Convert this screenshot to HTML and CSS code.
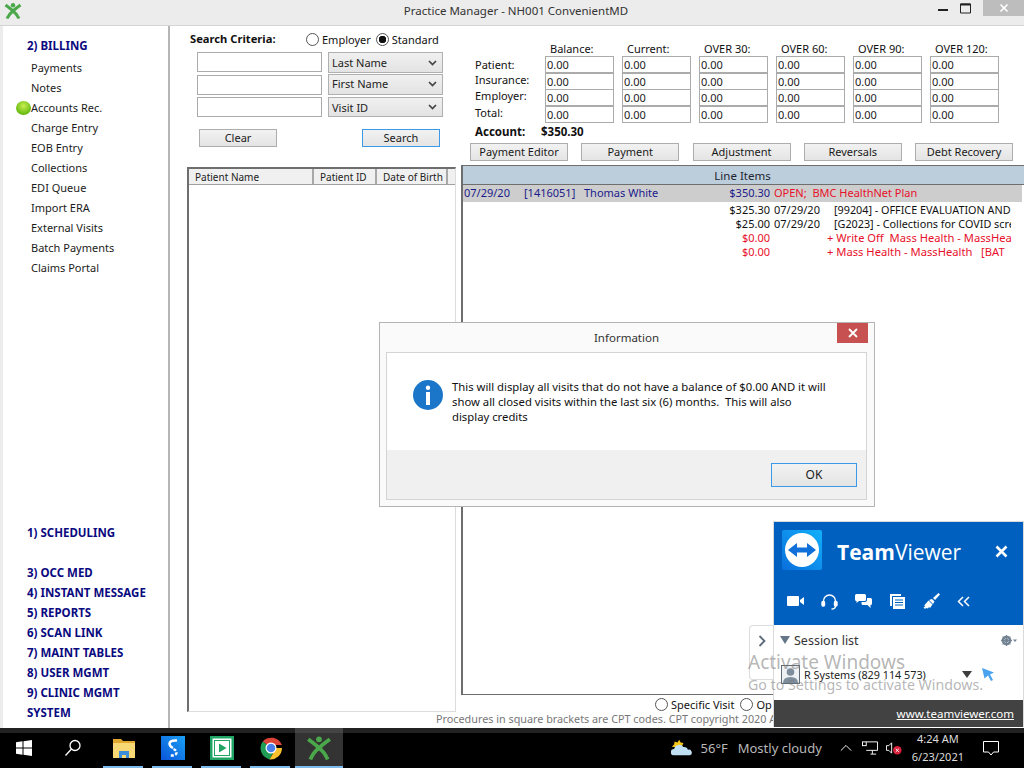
FILE: index.html
```html
<!DOCTYPE html>
<html lang="en">
<head>
<meta charset="utf-8">
<title>Practice Manager</title>
<link rel="stylesheet" href="styles.css">
</head>
<body>
<div class="screen">
  <div class="window">
    <header class="titlebar">
      <svg class="app-logo" viewBox="0 0 18 18"><circle cx="9" cy="3.2" r="2.2" fill="#4aa84a"/><path d="M1.5 3 Q7 7 9 9 Q11 7 16.5 3 M3 16.5 Q5 12 9 9 Q13 12 15 16.5" fill="none" stroke="#4aa84a" stroke-width="3"/></svg>
      <div class="title">Practice Manager - NH001 ConvenientMD</div>
      <div class="winctl">
        <span class="ctl"><svg width="10" height="10" viewBox="0 0 10 10"><path d="M0 7h10" stroke="#222" stroke-width="2"/></svg></span>
        <span class="ctl"><svg width="11" height="11" viewBox="0 0 11 11"><path d="M.5 2v8h10V1H.5z" fill="none" stroke="#222"/><path d="M.5 1.500h10" stroke="#222" stroke-width="2"/></svg></span>
        <span class="ctl ctl-close"><svg width="10" height="10" viewBox="0 0 10 10"><path d="M1.5 1.5l7 7M8.5 1.5l-7 7" stroke="#fff" stroke-width="1.6"/></svg></span>
      </div>
    </header>
    <div class="workspace">
      <nav class="sidebar">
        <div class="nav-top">
          <div class="nav-head nav-first">2) BILLING</div>
          <a class="nav-item">Payments</a>
          <a class="nav-item">Notes</a>
          <a class="nav-item nav-current"><span class="led"></span>Accounts Rec.</a>
          <a class="nav-item">Charge Entry</a>
          <a class="nav-item">EOB Entry</a>
          <a class="nav-item">Collections</a>
          <a class="nav-item">EDI Queue</a>
          <a class="nav-item">Import ERA</a>
          <a class="nav-item">External Visits</a>
          <a class="nav-item">Batch Payments</a>
          <a class="nav-item">Claims Portal</a>
        </div>
        <div class="nav-bottom">
          <div class="nav-head nav-gap">1) SCHEDULING</div>
          <div class="nav-head">3) OCC MED</div>
          <div class="nav-head">4) INSTANT MESSAGE</div>
          <div class="nav-head">5) REPORTS</div>
          <div class="nav-head">6) SCAN LINK</div>
          <div class="nav-head">7) MAINT TABLES</div>
          <div class="nav-head">8) USER MGMT</div>
          <div class="nav-head">9) CLINIC MGMT</div>
          <div class="nav-head">SYSTEM</div>
        </div>
      </nav>
      <section class="search">
        <div class="crit">
          <span class="crit-label">Search Criteria:</span>
          <label class="radio-label"><span class="radio"></span>Employer</label>
          <label class="radio-label"><span class="radio radio-on"></span>Standard</label>
        </div>
        <div class="fields">
          <div class="field"></div><div class="select select-tall">Last Name<svg class="chev" viewBox="0 0 9 6"><path d="M1 1l3.500 3.500L8 1" fill="none" stroke="#444" stroke-width="1.700"/></svg></div>
          <div class="field"></div><div class="select select-up">First Name<svg class="chev" viewBox="0 0 9 6"><path d="M1 1l3.500 3.500L8 1" fill="none" stroke="#444" stroke-width="1.700"/></svg></div>
          <div class="field"></div><div class="select">Visit ID<svg class="chev" viewBox="0 0 9 6"><path d="M1 1l3.500 3.500L8 1" fill="none" stroke="#444" stroke-width="1.700"/></svg></div>
        </div>
        <div class="search-btns">
          <div class="btn btn-search">Clear</div>
          <div class="btn btn-search btn-focus">Search</div>
        </div>
        <div class="results">
          <div class="results-head">
            <span class="col col-name">Patient Name</span>
            <span class="col col-id">Patient ID</span>
            <span class="col col-dob">Date of Birth</span>
          </div>
        </div>
      </section>
      <section class="account">
        <div class="aging">
          <span></span><span class="ah">Balance:</span><span class="ah">Current:</span><span class="ah">OVER 30:</span><span class="ah">OVER 60:</span><span class="ah">OVER 90:</span><span class="ah">OVER 120:</span>
          <span class="rl rl-first">Patient:</span><span class="cell">0.00</span><span class="cell">0.00</span><span class="cell">0.00</span><span class="cell">0.00</span><span class="cell">0.00</span><span class="cell">0.00</span>
          <span class="rl">Insurance:</span><span class="cell">0.00</span><span class="cell">0.00</span><span class="cell">0.00</span><span class="cell">0.00</span><span class="cell">0.00</span><span class="cell">0.00</span>
          <span class="rl">Employer:</span><span class="cell">0.00</span><span class="cell">0.00</span><span class="cell">0.00</span><span class="cell">0.00</span><span class="cell">0.00</span><span class="cell">0.00</span>
          <span class="rl">Total:</span><span class="cell">0.00</span><span class="cell">0.00</span><span class="cell">0.00</span><span class="cell">0.00</span><span class="cell">0.00</span><span class="cell">0.00</span>
        </div>
        <div class="acct-total"><b class="acct-label">Account:</b><b>$350.30</b></div>
        <div class="actions">
          <div class="btn btn-act">Payment Editor</div>
          <div class="btn btn-act">Payment</div>
          <div class="btn btn-act">Adjustment</div>
          <div class="btn btn-act">Reversals</div>
          <div class="btn btn-act">Debt Recovery</div>
        </div>
        <div class="items">
          <div class="items-head">Line Items</div>
          <div class="li li-main">
            <span>07/29/20</span><span>[1416051]</span><span>Thomas White</span><span class="amt">$350.30</span>
            <span class="li-open">OPEN;&nbsp; BMC HealthNet Plan</span>
          </div>
          <div class="li li-sub"><span class="amt">$325.30</span><span class="d">07/29/20</span><span class="desc">[99204] - OFFICE EVALUATION AND</span></div>
          <div class="li li-sub"><span class="amt">$25.00</span><span class="d">07/29/20</span><span class="desc">[G2023] - Collections for COVID scre</span></div>
          <div class="li li-sub li-red"><span class="amt">$0.00</span><span class="d"></span><span class="desc-red">+ Write Off&nbsp; Mass Health - MassHea</span></div>
          <div class="li li-sub li-red"><span class="amt">$0.00</span><span class="d"></span><span class="desc-red">+ Mass Health - MassHealth&nbsp;&nbsp; [BAT</span></div>
        </div>
        <div class="visit-opts">
          <label class="radio-label"><span class="radio"></span>Specific Visit</label>
          <label class="radio-label"><span class="radio"></span>Op</label>
        </div>
        <div class="cpt">Procedures in square brackets are CPT codes. CPT copyright 2020 A</div>
      </section>
    </div>
  </div>
  <footer class="taskbar">
    <div class="tb-left">
      <span class="tb-start"><svg width="16" height="16" viewBox="0 0 16 16" fill="#fff"><path d="M0 2.300L6.500 1.300V7.500H0zM7.500 1.200L16 0V7.500H7.500zM0 8.500H6.500V14.700L0 13.700zM7.500 8.500H16V16L7.500 14.800z"/></svg></span>
      <span class="tb-search"><svg width="18" height="18" viewBox="0 0 18 18" fill="none" stroke="#fff" stroke-width="1.300"><circle cx="11" cy="6.500" r="5"/><path d="M7.500 10L1.500 16.500"/></svg></span>
      <span class="tb-app tb-run"><svg width="22" height="20" viewBox="0 0 22 20"><path d="M0 1h8l2 2h12v4H0z" fill="#e0a92e"/><path d="M0 5h22v15H0z" fill="#f8d775"/><path d="M6 20v-7h10v7h-3v-3H9v3z" fill="#3b8fd8"/></svg></span>
      <span class="tb-app tb-run"><svg width="24" height="24" viewBox="0 0 24 24"><defs><linearGradient id="stile" x1="0" y1="1" x2="1" y2="0"><stop offset="0" stop-color="#0a55d8"/><stop offset="1" stop-color="#1aa0f5"/></linearGradient></defs><rect width="24" height="24" fill="url(#stile)"/><path d="M16 4.500Q9 4 8.500 7.500Q8.300 10 12 12" fill="none" stroke="#fff" stroke-width="2.400"/><path d="M12.500 13Q16 14.500 15.500 17Q15 20 9 19.500" fill="none" stroke="#fff" stroke-width="2.400" stroke-dasharray="3 1.600"/></svg></span>
      <span class="tb-app tb-run"><svg width="24" height="24" viewBox="0 0 24 24"><rect width="24" height="24" fill="#1fa463"/><rect x="2.500" y="2.500" width="19" height="19" fill="#fff"/><rect x="4" y="4" width="16" height="16" fill="#1fa463"/><rect x="5" y="5" width="14" height="14" fill="#fff"/><path d="M9 7.500l7.500 4.500L9 16.500z" fill="#1fa463"/></svg></span>
      <span class="tb-app tb-run"><svg width="24" height="24" viewBox="0 0 24 24"><path d="M12 12L3.700 5.500A11.500 11.500 0 0 1 23 9H12z" fill="#db4437"/><path d="M12 12L3.700 5.500A11.500 11.500 0 0 0 10.500 23.400L16 13z" fill="#1f9d55"/><path d="M12 12h11A11.500 11.500 0 0 1 10.500 23.400L16 14z" fill="#fbc02d"/><circle cx="12" cy="12" r="5.500" fill="#fff"/><circle cx="12" cy="12" r="4.300" fill="#4a80ec"/></svg></span>
      <span class="tb-app tb-active"><svg width="26" height="26" viewBox="0 0 18 18"><circle cx="9" cy="3" r="2" fill="#4aa84a"/><path d="M1.500 3 Q7 7 9 9 Q11 7 16.500 3 M3 17 Q5 12 9 9 Q13 12 15 17" fill="none" stroke="#4aa84a" stroke-width="2.600"/></svg></span>
    </div>
    <div class="tb-right">
      <svg class="tb-weather" width="22" height="20" viewBox="0 0 24 20"><path d="M9 1l1.500 3 3 .500-2 5-6 1.500-1.500-2-3-.500 2.500-2.500.500-3 3 1z" fill="#f5c518"/><path d="M3 18a3.500 3.500 0 0 1 .500-7 5.500 5.500 0 0 1 10-2 4 4 0 0 1 5 3 3 3 0 0 1 2 6z" fill="#bfe0f5"/></svg>
      <span class="tb-temp">56°F</span>
      <span class="tb-cond">Mostly cloudy</span>
      <svg class="tb-chevron" width="12" height="8" viewBox="0 0 14 8"><path d="M1 7l6-6 6 6" fill="none" stroke="#fff" stroke-width="1.100"/></svg>
      <svg class="tb-net" width="16" height="14" viewBox="0 0 17 14" fill="none" stroke="#fff"><path d="M4.500 .500h12v9h-12M9 13.500h6M11 9.500v4"/><rect x=".5" y=".5" width="4" height="4"/></svg>
      <span class="tb-vol"><svg width="16" height="14" viewBox="0 0 17 14"><path d="M.5 4.500h2.500l3-3v11l-3-3H.5z" fill="none" stroke="#fff"/><circle cx="12" cy="9.500" r="4.500" fill="#d8203a"/><path d="M10.300 7.800l3.400 3.400M13.700 7.800l-3.400 3.400" stroke="#fff"/></svg></span>
      <div class="tb-clock"><span>4:24 AM</span><span>6/23/2021</span></div>
      <svg class="tb-notify" width="16" height="15" viewBox="0 0 16 15"><path d="M.5 .5h15v10.500h-5l-2.500 3-2.500-3h-5z" fill="none" stroke="#fff"/></svg>
    </div>
  </footer>

  <div class="dialog">
    <div class="dlg-title">Information
      <span class="dlg-close"><svg width="10" height="10" viewBox="0 0 10 10"><path d="M1 1l8 8M9 1l-8 8" stroke="#fff" stroke-width="1.800"/></svg></span>
    </div>
    <div class="dlg-panel">
      <div class="dlg-body">
        <svg class="dlg-icon" width="30" height="30" viewBox="0 0 30 30"><circle cx="15" cy="15" r="15" fill="#1b76c9"/><rect x="12.800" y="5.500" width="4.400" height="4.400" rx="2.200" fill="#fff"/><rect x="13" y="12" width="4" height="13" fill="#fff"/></svg>
        <p class="dlg-text">This will display all visits that do not have a balance of $0.00 AND it will<br>show all closed visits within the last six (6) months.&nbsp; This will also<br>display credits</p>
      </div>
      <div class="dlg-foot"><div class="btn btn-ok">OK</div></div>
    </div>
  </div>

  <div class="tv-tab"><svg width="8" height="12" viewBox="0 0 8 12"><path d="M1.500 1l5 5-5 5" fill="none" stroke="#5a6a7a" stroke-width="1.800"/></svg></div>
  <aside class="tv">
    <div class="tv-blue">
      <div class="tv-head">
        <svg class="tv-logo" width="40" height="40" viewBox="0 0 40 40"><defs><linearGradient id="tvg" x1="0" y1="1" x2="1" y2="0"><stop offset="0" stop-color="#0a6fdc"/><stop offset="1" stop-color="#12b0fb"/></linearGradient></defs><rect width="40" height="40" rx="2" fill="url(#tvg)"/><circle cx="20" cy="20" r="17" fill="#fff"/><path d="M6 20l9-7v4.500h10V13l9 7-9 7v-4.500H15V27z" fill="#0e70d8"/></svg>
        <div class="tv-name"><b>Team</b>Viewer</div>
        <svg class="tv-x" width="13" height="13" viewBox="0 0 13 13"><path d="M1.500 1.500l10 10M11.500 1.500l-10 10" stroke="#fff" stroke-width="2.600"/></svg>
      </div>
      <div class="tv-tools">
        <svg width="17" height="12" viewBox="0 0 17 12" fill="#fff"><rect y="1" width="12" height="10" rx="1"/><path d="M13 5l4-3v8l-4-3z"/></svg>
        <svg width="17" height="17" viewBox="0 0 17 17" fill="none" stroke="#fff" stroke-width="1.400"><path d="M2.500 10V8a6 6 0 0 1 12 0v2"/><rect x="1" y="8.500" width="2.500" height="4.500" rx="1" fill="#fff"/><rect x="13.500" y="8.500" width="2.500" height="4.500" rx="1" fill="#fff"/><path d="M14.500 13q0 3-4 3"/></svg>
        <svg width="17" height="15" viewBox="0 0 17 15" fill="#fff"><path d="M0 1.500Q0 0 1.500 0h8Q11 0 11 1.500v4Q11 7 9.500 7H4L1.500 9V7Q0 7 0 5.500z"/><path d="M12 4h3.500Q17 4 17 5.500v4Q17 11 15.500 11v3l-3-3H8Q6.500 11 6.500 9.500V8H10Q12 8 12 6z"/></svg>
        <svg width="17" height="15" viewBox="-1 0 17 15" fill="#fff"><path d="M0 0h11v2H2v10H0z"/><path d="M3 3h12v12H3z"/><path d="M5 6h8M5 8.500h8M5 11h8" stroke="#0060c0"/></svg>
        <svg width="17" height="17" viewBox="0 0 17 17" fill="#fff"><path d="M10 5l2 2 5-5.500L15.500 0z"/><path d="M9 6l2.500 2.500L10 11 6 7z"/><path d="M5.500 7.500l4 4L7 15l-1-1-1 1.500L3 15l-1 1-1.500-1.500 2-1.500-1.500-.500L2 11.500z"/></svg>
        <svg width="13" height="11" viewBox="0 0 13 11" fill="none" stroke="#fff" stroke-width="1.500"><path d="M6 1L1.500 5.500 6 10M12 1L7.500 5.500 12 10"/></svg>
      </div>
    </div>
    <div class="tv-white">
      <div class="tv-sess">
        <svg width="10" height="8" viewBox="0 0 10 8"><path d="M0 0h10L5 8z" fill="#647687"/></svg>
        <span class="tv-sess-label">Session list</span>
        <svg class="tv-gear" width="16" height="11" viewBox="0 0 16 11"><circle cx="5.500" cy="5.500" r="3.700" fill="none" stroke="#738393" stroke-width="2.200"/><path d="M5.500 0v11M0 5.500h11M1.600 1.600l7.800 7.800M9.400 1.600l-7.800 7.800" stroke="#738393" stroke-width="1.300"/><path d="M12 4.500h4L14 7z" fill="#738393"/></svg>
      </div>
      <div class="tv-row">
        <svg class="tv-avatar" width="19" height="19" viewBox="0 0 19 19"><rect x=".5" y=".5" width="18" height="18" fill="#eef1f4" stroke="#5f6b76"/><circle cx="9.500" cy="7" r="3.800" fill="#7d8d9c"/><path d="M2 18q0-6 7.500-6t7.500 6z" fill="#7d8d9c"/></svg>
        <span class="tv-peer">R Systems (829 114 573)</span>
        <svg class="tv-drop" width="10" height="7" viewBox="0 0 10 7"><path d="M0 0h10L5 7z" fill="#3d3d3d"/></svg>
        <svg class="tv-cursor" width="13" height="13" viewBox="0 0 13 13"><path d="M0 0l12 4.500-4 2L11 12l-2 1-3-5.500-3.500 3z" fill="#4aa3ee"/></svg>
      </div>
    </div>
    <div class="tv-foot"><a class="tv-link">www.teamviewer.com</a></div>
  </aside>

  <div class="watermark">
    <div class="wm-1">Activate Windows</div>
    <div class="wm-2">Go to Settings to activate Windows.</div>
  </div>
</div>
</body>
</html>
```
FILE: styles.css
```css
* { box-sizing: border-box; }
html, body { margin: 0; padding: 0; }
body { font-family: "Noto Sans", "Liberation Sans", sans-serif; font-size: 11px; color: #111; background: #fff; }
.screen { position: relative; width: 1024px; height: 768px; overflow: hidden; display: flex; flex-direction: column; }

/* main window */
.window { height: 728px; flex: none; display: flex; flex-direction: column; background: #fff; }
.titlebar { height: 26px; flex: none; background: #ececec; border-bottom: 1px solid #d4d4d4; display: flex; align-items: flex-start; position: relative; }
.app-logo { width: 18px; height: 18px; margin: 2px 0 0 4px; }
.title { position: absolute; left: 8px; right: 0; top: 3px; text-align: center; font-size: 11.500px; line-height: 16px; color: #333; }
.winctl { margin-left: auto; display: flex; position: relative; }
.ctl { width: 23px; height: 16px; display: flex; align-items: center; justify-content: center; }
.ctl-close { width: 41px; background: #bdbdbd; margin-left: 6px; }

.workspace { flex: 1; min-height: 0; display: flex; border-left: 3px solid #ececec; }
.sidebar { width: 167px; flex: none; border-right: 2px solid #b5b5b5; display: flex; flex-direction: column; justify-content: space-between; padding: 10px 0 5px; }
.nav-head { padding-left: 24px; font-weight: 700; font-size: 11.500px; line-height: 20px; color: #0a0a80; white-space: nowrap; }
.nav-first { margin-bottom: 2px; }
.nav-gap { margin-bottom: 20px; }
.nav-item { display: block; padding-left: 28px; line-height: 20px; color: #1c1c1c; position: relative; }
.led { position: absolute; left: 13px; top: 3px; width: 15px; height: 14px; border-radius: 50%; background: radial-gradient(circle at 50% 35%, #c8ee50, #62b80f 75%); }

/* search column */
.search { width: 291px; flex: none; display: flex; flex-direction: column; padding: 5px 0 16px 18px; position: relative; }
.crit { display: flex; align-items: center; height: 16px; }
.crit-label { font-weight: 700; width: 118px; padding: 0 0 2px 2px; white-space: nowrap; font-size: 11.200px; }
.radio-label { display: inline-flex; align-items: center; gap: 3px; margin-right: 5px; white-space: nowrap; }
.radio { width: 13px; height: 13px; border: 1px solid #555; border-radius: 50%; background: #fff; display: inline-block; flex: none; }
.radio-on { background: radial-gradient(circle, #111 0 3.500px, #fff 4px); }
.fields { display: grid; grid-template-columns: 125px 115px; column-gap: 6px; row-gap: 2px; margin: 5px 0 0 9px; width: 246px; }
.field { height: 20px; border: 1px solid #ababab; background: #fff; }
.select { height: 20px; border: 1px solid #b0b0b0; background: linear-gradient(#f0f0f0, #e3e3e3); display: flex; align-items: center; justify-content: space-between; padding: 0 5px 0 3px; color: #222; }
.select-tall { height: 21px; }
.select-up { height: 21px; margin-top: -1px; padding-bottom: 2px; }
.chev { width: 9px; height: 6px; }
.search-btns { display: flex; justify-content: space-between; width: 241px; margin: 12px 0 0 11px; }
.btn { display: flex; align-items: center; justify-content: center; border: 1px solid #adadad; background: linear-gradient(#f2f2f2, #e4e4e4); color: #1a1a1a; white-space: nowrap; padding-bottom: 2px; }
.btn-search { width: 78px; height: 18px; }
.btn-focus { border-color: #3c99e8; }
.results { flex: 1; margin: 20px 0 0 -1px; width: 269px; border: 2px solid #6e6e6e; border-right-color: #dcdcdc; border-bottom-color: #dcdcdc; border-bottom-width: 1px; border-right-width: 1px; background: #fff; }
.results-head { height: 16px; display: flex; background: #f0f0f0; border-bottom: 1px solid #a0a0a0; }
.col { padding-left: 6px; border-right: 2px solid #a8a8a8; font-size: 10px; line-height: 17px; white-space: nowrap; color: #222; }
.col-name { width: 125px; }
.col-id { width: 63px; }
.col-dob { width: 71px; }

/* account column */
.account { flex: 1; min-width: 0; display: flex; flex-direction: column; padding-top: 17px; position: relative; }
.aging { display: grid; grid-template-columns: 77px repeat(6, 70px); column-gap: 7px; grid-template-rows: 13px 17px 16px 17px 17px; }
.aging > span { white-space: nowrap; }
.ah { line-height: 12px; color: #111; padding-left: 5px; }
.rl { padding-left: 14px; line-height: 14px; }
.rl-first { line-height: 17px; }
.cell { border: 1px solid #ababab; height: 17px; line-height: 16px; padding-left: 1px; margin-right: 1px; background: #fff; color: #222; }
.acct-total { display: flex; font-size: 11.500px; line-height: 16px; margin: 1px 0 0 14px; height: 16px; }
.acct-label { width: 66px; }
.actions { display: flex; justify-content: space-between; margin: 3px 11px 0 9px; }
.btn-act { width: 98px; height: 18px; }
.items { flex: 1; margin-top: 4px; border: 1px solid #6e6e6e; border-left-width: 2px; border-right: 0; background: #fff; display: flex; flex-direction: column; }
.items-head { height: 19px; flex: none; background: #bccddb; border-bottom: 1px solid #6e6e6e; text-align: center; line-height: 20px; font-size: 11.500px; color: #1c2530; padding-right: 2px; }
.li { display: grid; grid-template-columns: 60px 60px 120px 66px 4px 1fr; white-space: nowrap; padding-left: 1px; }
.li-main { height: 17px; line-height: 16px; background: #cdcdcd; color: #1a1a8c; margin-right: 2px; }
.li-sub { line-height: 14px; color: #111; grid-template-columns: 60px 60px 120px 66px 4px 60px 177px; }
.li-main + .li-sub { margin-top: 1px; }
.li-sub .amt { grid-column: 4; }
.amt { text-align: right; }
.li-open { grid-column: 6; color: #e8102a; }
.d { grid-column: 6; }
.desc { grid-column: 7; overflow: hidden; font-size: 10.800px; }
.desc-red { grid-column: 7; overflow: hidden; margin-left: -7px; margin-right: -2px; font-size: 11.200px; }
.li-red { color: #e8102a; }
.visit-opts { height: 19px; flex: none; padding-left: 194px; white-space: nowrap; display: flex; align-items: center; }
.visit-opts .radio-label { gap: 3px; margin-right: 6px; }
.cpt { height: 15px; flex: none; line-height: 12px; font-size: 10.800px; margin-top: -1px; margin-left: -25px; white-space: nowrap; color: #777; }

/* taskbar */
.taskbar { height: 40px; flex: none; background: #000; border-top: 5px solid #222; display: flex; justify-content: space-between; color: #fff; }
.tb-left { display: flex; align-items: stretch; }
.tb-start { width: 48px; display: flex; align-items: center; justify-content: center; padding-bottom: 5px; }
.tb-search { width: 48px; display: flex; align-items: center; justify-content: center; margin-right: 3px; padding: 0 0 5px 2px; }
.tb-app { width: 49px; display: flex; align-items: center; justify-content: center; position: relative; padding-bottom: 5px; }
.tb-run::after, .tb-active::after { content: ""; position: absolute; left: 4px; right: 5px; bottom: 0; height: 2px; background: #7dbcec; }
.tb-active { background: linear-gradient(#444 0 5px, #333 5px); margin-top: -5px; padding-top: 5px; width: 48px; }
.tb-active::after { left: 0; right: 0; }
.tb-right { display: flex; align-items: center; padding-bottom: 5px; }
.tb-weather { margin-right: 8px; }
.tb-temp { font-size: 13px; margin-right: 10px; color: #b8b8b8; }
.tb-cond { font-size: 13px; margin-right: 18px; color: #b8b8b8; white-space: nowrap; }
.tb-chevron { margin-right: 10px; }
.tb-net { margin-right: 8px; }
.tb-vol { display: flex; margin-right: 10px; }
.tb-clock { display: flex; flex-direction: column; align-items: center; font-size: 11px; line-height: 18px; margin-right: 19px; color: #ddd; }
.tb-notify { margin-right: 25px; }

/* dialog window */
.dialog { position: absolute; left: 379px; top: 322px; width: 496px; height: 185px; background: #fafafa; border: 1px solid #b4b4b4; padding: 0 7px 6px 6px; display: flex; flex-direction: column; }
.dlg-title { height: 29px; flex: none; text-align: center; font-size: 11.500px; line-height: 30px; color: #333; position: relative; }
.dlg-close { position: absolute; right: -1px; top: 0; width: 31px; height: 20px; background: #c75050; display: flex; align-items: center; justify-content: center; }
.dlg-panel { flex: 1; border: 1px solid #d4d4d4; display: flex; flex-direction: column; }
.dlg-body { height: 97px; flex: none; background: #fff; display: flex; padding: 27px 0 0 26px; }
.dlg-icon { flex: none; }
.dlg-text { margin: -1px 0 0 9px; font-size: 11.300px; line-height: 15px; color: #111; white-space: nowrap; }
.dlg-foot { flex: 1; background: #f0f0f0; display: flex; justify-content: flex-end; padding: 13px 9px 0 0; }
.btn-ok { width: 86px; height: 24px; border-color: #3c99e8; font-size: 12px; }

/* TeamViewer panel */
.tv { position: absolute; left: 773px; top: 521px; width: 251px; height: 206px; display: flex; flex-direction: column; background: #fff; border: 1px solid #dadada; border-bottom: 0; }
.tv-blue { height: 103px; flex: none; background: #0060c0; padding: 8px 8px 0; }
.tv-head { display: flex; align-items: center; height: 40px; }
.tv-name { font-size: 21px; line-height: 30px; padding-top: 3px; color: #fff; margin-left: 15px; font-family: "Open Sans", sans-serif; }
.tv-name b { font-weight: 700; }
.tv-x { margin: 2px 7px 0 auto; }
.tv-tools { display: flex; align-items: center; gap: 17px; margin: 22px 0 0 5px; height: 18px; }
.tv-white { flex: 1; padding: 7px 5px 0 6px; }
.tv-sess { display: flex; align-items: center; height: 16px; }
.tv-sess-label { font-size: 12.500px; margin-left: 4px; color: #333; }
.tv-gear { margin-left: auto; margin-right: 1px; }
.tv-row { display: flex; align-items: center; margin-top: 17px; height: 19px; padding-left: 1px; }
.tv-peer { margin-left: 4px; font-size: 10.800px; width: 158px; white-space: nowrap; color: #222; }
.tv-cursor { margin-left: 10px; }
.tv-foot { height: 27px; flex: none; background: #424242; display: flex; align-items: center; justify-content: flex-end; padding-right: 9px; }
.tv-link { color: #fff; text-decoration: underline; font-size: 11.500px; }
.tv-tab { position: absolute; left: 749px; top: 625px; width: 25px; height: 55px; background: #fff; border: 1px solid #dcdcdc; border-right: 0; border-radius: 4px 0 0 4px; display: flex; align-items: flex-start; justify-content: center; padding-top: 9px; }
.watermark { position: absolute; left: 748px; top: 650px; color: rgba(120, 120, 120, .55); white-space: nowrap; pointer-events: none; }
.wm-1 { font-size: 19px; line-height: 24px; }
.wm-2 { font-size: 14.200px; line-height: 22px; }
```
